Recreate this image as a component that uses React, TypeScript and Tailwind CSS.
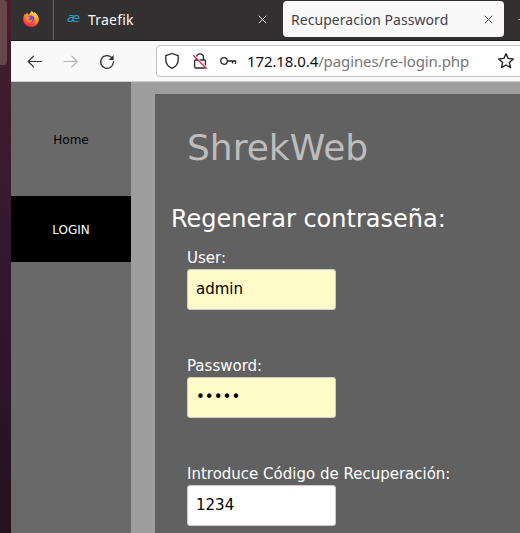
import React from "react";

function FirefoxLogo() {
  return (
    <svg className="block" width="18" height="18" viewBox="0 0 18 18">
      <defs>
        <linearGradient id="flame" x1="0.8" y1="0" x2="0.3" y2="1">
          <stop offset="0" stopColor="#fff04a" />
          <stop offset="0.4" stopColor="#ffa022" />
          <stop offset="0.7" stopColor="#ff5232" />
          <stop offset="1" stopColor="#f52366" />
        </linearGradient>
      </defs>
      <path
        d="M9.7 1c1.1.7 1.9 1.5 2.3 2.6.3-.5.3-.9.2-1.5 2.9 1.700 4.600 4.300 4.600 7.300 0 4.100-3.300 7.400-7.700 7.400S1.200 13.600 1.200 9.300c0-2.500.8-4.300 2-5.700l.4 1.400c.4-.7.7-1.800 1.700-2.600 0 1 .4 1.700 1.100 2.300 1.300-.1 1.700-1.800 3.300-3.700z"
        fill="url(#flame)"
      />
      <circle cx="8.800" cy="9" r="3.400" fill="#7a45e0" />
      <path d="M3.400 6.800c1.600-1 3.600-.6 4.900.4-.2 1.300-1.800 1.100-2 2.100 1.100 1.700 3.600.9 4.500-.2-.2 2.100-1.900 3.600-4 3.300-2.300-.3-3.700-2.500-3.400-5.600z" fill="#ff8a20" />
    </svg>
  );
}

function CloseIcon({ className }: { className: string }) {
  return (
    <svg className={`block shrink-0 ${className}`} width="9" height="9" viewBox="0 0 9 9" fill="none" stroke="currentColor" strokeWidth="1">
      <path d="M.8.8l7.400 7.400M8.200.8L.8 8.200" />
    </svg>
  );
}

function ArrowIcon({ className }: { className: string }) {
  return (
    <svg className={`block shrink-0 ${className}`} width="16" height="14" viewBox="0 0 16 14" fill="none" stroke="currentColor" strokeWidth="1.200" strokeLinecap="round" strokeLinejoin="round">
      <path d="M14.500 7.500H1.200M6.600 2.100L1.200 7.500l5.400 5.400" />
    </svg>
  );
}

function TabStrip() {
  return (
    <div className="flex h-[41px] border-b border-[#1d1c1d] bg-[#323031]">
      <div className="flex w-[43px] shrink-0 justify-center border-r border-[#676566] pt-[10px] pr-[3px]">
        <FirefoxLogo />
      </div>
      <div className="flex h-[39px] w-[215px] shrink-0 items-center pl-[13px] text-[#fbfbfe]">
        <span className="w-[21px] pb-[3px] font-['DejaVu_Sans',sans-serif] text-[13px] leading-[18px] text-[#2ba2bd] italic">æ</span>
        <span className="w-[170px] font-['Noto_Sans','Open_Sans',sans-serif] text-[14px] tracking-[0.2px]">Traefik</span>
        <CloseIcon className="text-[#e8e8e8]" />
      </div>
      <div className="mt-px ml-[14px] flex h-9 w-[221px] shrink-0 items-center rounded bg-[#f9f9fa] pl-2 text-[#42414a]">
        <span className="w-[193px] font-['Noto_Sans','Open_Sans',sans-serif] text-[14px] tracking-[0.05px] whitespace-nowrap">Recuperacion Password</span>
        <CloseIcon className="text-[#444444]" />
      </div>
      <div className="ml-[14px] pt-[19px]">
        <div className="h-px w-2 bg-[#aaaaaa]" />
      </div>
    </div>
  );
}

function Toolbar() {
  return (
    <div className="flex h-[41px] border-b border-[#cccccc] bg-[#f9f9fa]">
      <div className="flex w-[145px] shrink-0 items-center gap-5 pl-4">
        <ArrowIcon className="text-[#303030]" />
        <svg className="block shrink-0 text-[#b3b3b3]" width="16" height="14" viewBox="0 0 16 14" fill="none" stroke="currentColor" strokeWidth="1.200" strokeLinecap="round" strokeLinejoin="round">
          <path d="M1 7.500h13.300M8.900 2.100l5.400 5.400-5.400 5.400" />
        </svg>
        <svg className="mt-px block" width="16" height="16" viewBox="0 0 16 16" fill="none" stroke="#303030" strokeWidth="1.300">
          <path d="M12.500 3.400A6.400 6.400 0 1 0 14.400 8" strokeLinecap="round" />
          <path d="M14.600 1v5h-5z" fill="#303030" stroke="none" />
        </svg>
      </div>
      <div className="mt-1 flex h-8 w-[380px] shrink-0 items-center rounded border border-[#c3c3c5] bg-white pl-[7px] text-[#252525]">
        <svg className="block shrink-0" width="16" height="18" viewBox="0 0 16 18" fill="none" stroke="currentColor" strokeWidth="1.300" strokeLinejoin="round">
          <path d="M8 1.500l6.200 2.200v3.800c0 3.900-2.400 7.300-6.200 8.900-3.800-1.600-6.200-5-6.200-8.900V3.700z" />
        </svg>
        <svg className="ml-3 block shrink-0" width="16" height="18" viewBox="0 0 16 18" fill="none" stroke="currentColor" strokeWidth="1.300">
          <rect x="2.600" y="8" width="10.800" height="8" rx="1.200" />
          <path d="M4.500 8V5.300a3.500 3.500 0 0 1 7 0V8" />
          <path d="M2.200 3.200l13 12.800" stroke="white" strokeWidth="1.300" />
          <path d="M1.200 3.200l13.600 13.600" stroke="#e22850" strokeWidth="1.400" />
        </svg>
        <svg className="ml-[11px] block shrink-0" width="18" height="12" viewBox="0 0 18 12" fill="none" stroke="currentColor" strokeWidth="1.300">
          <circle cx="5" cy="6" r="3.300" />
          <path d="M8.300 6H16.500V9M13.500 6v2.500" />
        </svg>
        <div className="ml-[10px] w-[250px] font-['Noto_Sans','Open_Sans',sans-serif] text-[15px] tracking-[-0.1px] whitespace-nowrap text-[#76757a]">
          <span className="text-[#0c0c0d]">172.18.0.4</span>/pagines/re-login.php
        </div>
        <svg className="block shrink-0" width="18" height="18" viewBox="0 0 18 18" fill="none" stroke="currentColor" strokeWidth="1.400" strokeLinejoin="round">
          <path d="M9 1.700l2.100 4.700 5.200.6-3.900 3.500 1.100 5.100L9 13l-4.500 2.600 1.100-5.100L1.700 7l5.200-.6z" />
        </svg>
      </div>
    </div>
  );
}

function Field({ label, value, filled }: { label: string; value: string; filled?: boolean }) {
  return (
    <div className="h-[108px] pl-4">
      <div className="h-[22px] text-[15px] leading-[23px]">{label}</div>
      <div className={`flex h-[41px] w-[149px] items-center rounded-[3px] border border-[#cccccc] pl-2 text-[15px] text-black ${filled ? "bg-[#fffbc8]" : "bg-white"}`}>
        {value}
      </div>
    </div>
  );
}

export default function App() {
  return (
    <div className="flex h-[533px] w-[520px] overflow-hidden bg-[#9e9e9e]">
      <aside className="w-[11px] shrink-0 bg-linear-to-b from-[#471e2a] via-[#32182f] to-[#24121d]">
        <div className="h-[65px] w-[7px] rounded-r bg-[#69464e]" />
      </aside>
      <div className="w-[509px] shrink-0">
        <TabStrip />
        <Toolbar />
        <div className="flex h-[451px] font-['DejaVu_Sans',sans-serif]">
          <nav className="w-[120px] shrink-0 bg-[#696969] text-center text-[12px]">
            <div className="flex h-[114px] items-center justify-center pt-[2px] text-black">Home</div>
            <div className="flex h-[66px] items-center justify-center bg-black pt-[2px] text-white">LOGIN</div>
          </nav>
          <main className="mt-3 ml-6 h-[439px] w-[365px] shrink-0 overflow-hidden bg-[#616161] pl-4 text-white">
            <h1 className="mt-[27px] pl-4 text-[36px] leading-[54px] text-[#bdbdbd]">ShrekWeb</h1>
            <h2 className="mt-[26px] mb-[10px] text-[24px] leading-9">Regenerar contraseña:</h2>
            <Field label="User:" value="admin" filled />
            <Field label="Password:" value="•••••" filled />
            <Field label="Introduce Código de Recuperación:" value="1234" />
          </main>
        </div>
      </div>
    </div>
  );
}
